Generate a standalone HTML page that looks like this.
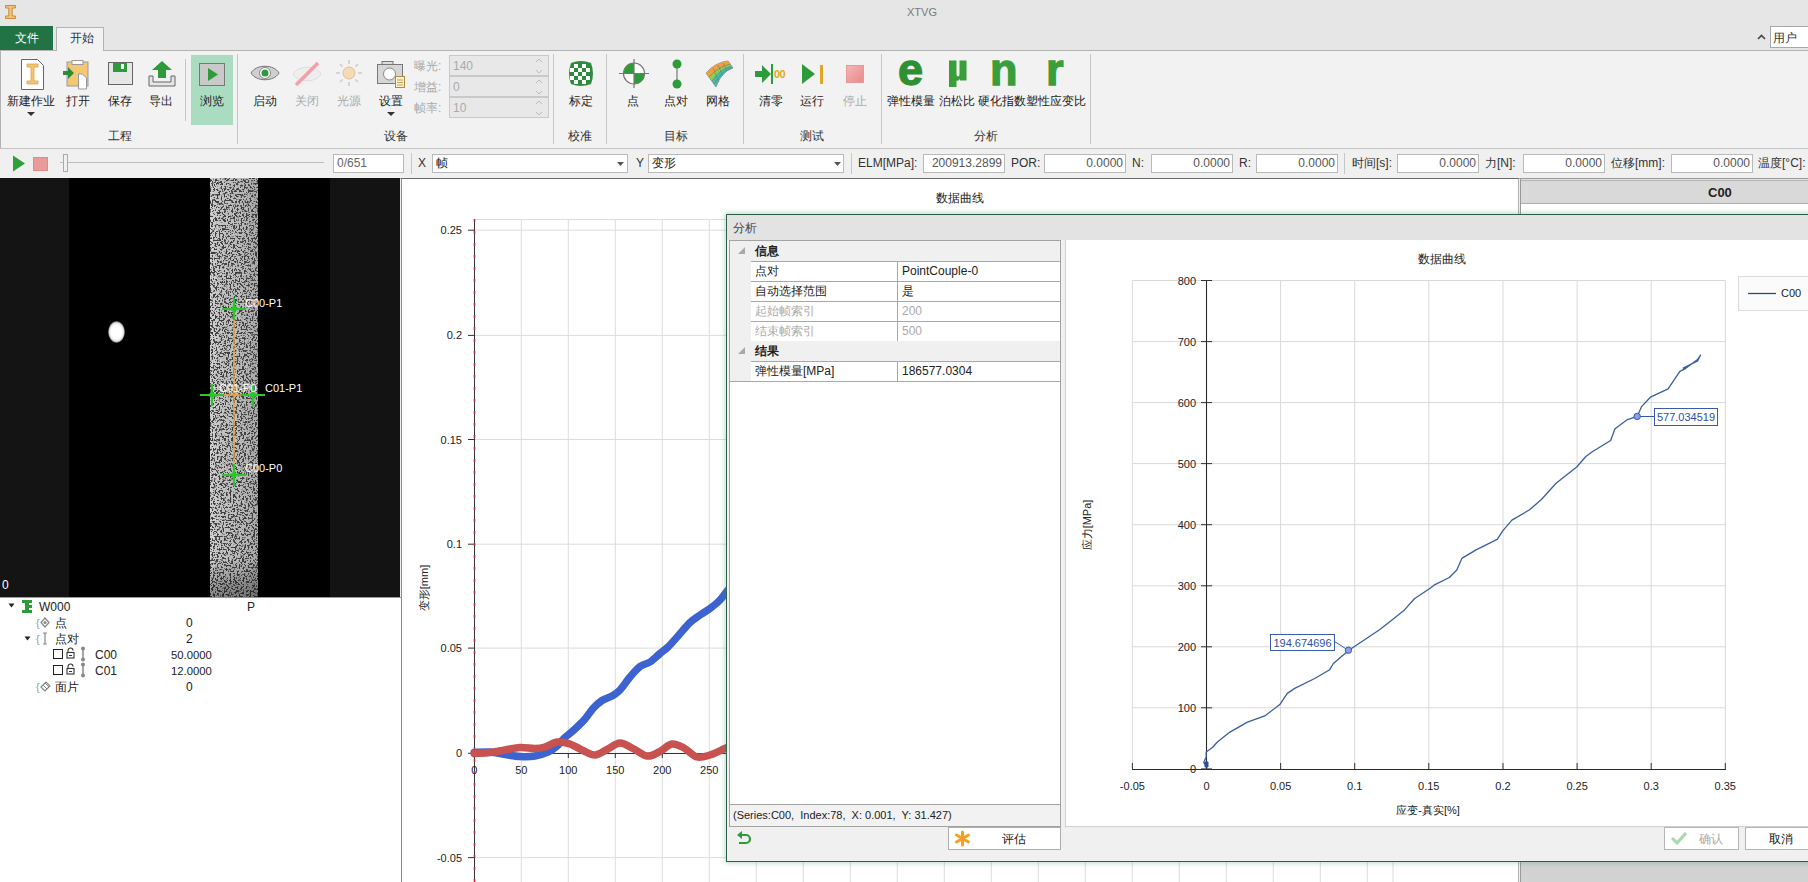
<!DOCTYPE html>
<html><head><meta charset="utf-8">
<style>
*{box-sizing:border-box;margin:0;padding:0}
html,body{width:1808px;height:882px;overflow:hidden;background:#f0f0f0;font-family:"Liberation Sans",sans-serif;font-size:12px;color:#222}
.a{position:absolute}
.t{position:absolute;white-space:nowrap;line-height:14px;height:14px}
.c{position:absolute;white-space:nowrap;line-height:14px;height:14px;width:120px;margin-left:-60px;text-align:center}
.lb{top:94px;color:#222}
.gl{top:129px;color:#333}
.dis{color:#aaa}
.sep{position:absolute;width:1px;background:#c6c6c6}
.box{position:absolute;background:#fff;border:1px solid #b9b9b9;height:19px;top:154px;text-align:right;padding-right:2px;line-height:17px;color:#555;font-size:12px}
.tbl{position:absolute;top:156px;line-height:14px;color:#333;white-space:nowrap}
</style></head><body>
<!-- ===== title bar ===== -->
<div class="a" style="left:0;top:0;width:1808px;height:51px;background:#e6e6e6"></div>
<svg class="a" style="left:4px;top:4px" width="13" height="16" viewBox="0 0 13 16">
 <path d="M1.5 1.5h10v2.5h-3.3v8h3.3v2.5h-10v-2.5h3.3v-8H1.5z" fill="#f3c477" stroke="#c98a3a" stroke-width="1"/>
</svg>
<div class="t" style="left:907px;top:5px;font-size:11px;color:#7a7a7a">XTVG</div>
<div class="a" style="left:0;top:26px;width:53px;height:24px;background:#217346"></div>
<div class="t" style="left:15px;top:31px;color:#fff">文件</div>
<div class="a" style="left:56px;top:27px;width:48px;height:24px;background:#f2f2f2;border:1px solid #b3b3b3;border-bottom:none;z-index:2"></div>
<div class="t" style="left:70px;top:31px;color:#333;z-index:3">开始</div>
<svg class="a" style="left:1757px;top:34px" width="9" height="6"><path d="M1 5L4.5 1.5 8 5" fill="none" stroke="#444" stroke-width="1.6"/></svg>
<div class="a" style="left:1770px;top:26px;width:40px;height:22px;background:#fff;border:1px solid #a8a8a8"></div>
<div class="t" style="left:1773px;top:31px;color:#333">用户</div>

<!-- ===== ribbon ===== -->
<div class="a" style="left:0;top:50px;width:1808px;height:99px;background:#f2f2f2;border-top:1px solid #b3b3b3;border-bottom:1px solid #c5c5c5;border-left:1px solid #b3b3b3"></div>
<!-- 工程 -->
<svg class="a" style="left:20px;top:58px" width="26" height="33" viewBox="0 0 26 33">
 <path d="M1.5 1.5h16l6 6v24h-22z" fill="#fff" stroke="#666" stroke-width="1"/>
 <path d="M7 6h11v3h-4v14h4v3H7v-3h4V9H7z" fill="#f2c572" stroke="#d9a545" stroke-width=".8"/>
</svg>
<div class="c lb" style="left:31px">新建作业</div>
<svg class="a" style="left:27px;top:112px" width="8" height="5"><path d="M0 0h8L4 4z" fill="#333"/></svg>
<svg class="a" style="left:63px;top:60px" width="30" height="30" viewBox="0 0 30 30">
 <rect x="4" y="2" width="21" height="24" fill="#f4c774" stroke="#999" stroke-width="1"/>
 <rect x="9" y="0.5" width="11" height="4" fill="#fff" stroke="#999"/>
 <path d="M15.5 14h4l4 4v11h-8z" fill="#fff" stroke="#999"/>
 <path d="M0 11h5V7l6 6-6 6v-4H0z" fill="#2e8b3e"/>
</svg>
<div class="c lb" style="left:78px">打开</div>
<svg class="a" style="left:108px;top:62px" width="25" height="23" viewBox="0 0 25 23">
 <rect x="0.5" y="0.5" width="24" height="22" fill="#e6e6e6" stroke="#666"/>
 <rect x="5" y="1" width="14" height="9" fill="#2e9a3a"/>
 <rect x="13" y="2" width="3" height="5" fill="#fff"/>
</svg>
<div class="c lb" style="left:120px">保存</div>
<svg class="a" style="left:148px;top:60px" width="28" height="28" viewBox="0 0 28 28">
 <path d="M1 16v10h26V16h-4v6H5v-6z" fill="#e6e6e6" stroke="#666"/>
 <path d="M14 1l10 9h-6v8h-8v-8H4z" fill="#2e9a3a"/>
</svg>
<div class="c lb" style="left:161px">导出</div>
<div class="sep" style="left:185px;top:59px;height:62px"></div>
<div class="a" style="left:191px;top:55px;width:42px;height:70px;background:#a9dcc1"></div>
<svg class="a" style="left:199px;top:63px" width="26" height="23" viewBox="0 0 26 23">
 <rect x="0.5" y="0.5" width="25" height="22" fill="#c9c9c9" stroke="#777"/>
 <path d="M9 5l10 6.5L9 18z" fill="#2e9a3a"/>
</svg>
<div class="c lb" style="left:212px">浏览</div>
<div class="c gl" style="left:120px">工程</div>
<div class="sep" style="left:237px;top:54px;height:90px"></div>
<!-- 设备 -->
<svg class="a" style="left:250px;top:61px" width="30" height="24" viewBox="0 0 30 24">
 <path d="M1 12C6 3 24 3 29 12C24 21 6 21 1 12z" fill="#cfcfcf" stroke="#777"/>
 <circle cx="15" cy="12" r="5.5" fill="#fff" stroke="#888"/>
 <circle cx="15" cy="12" r="3.5" fill="#2e9a3a"/>
</svg>
<div class="c lb" style="left:265px">启动</div>
<svg class="a" style="left:292px;top:60px" width="30" height="28" viewBox="0 0 30 28">
 <path d="M1 14C6 5 24 5 29 14C24 23 6 23 1 14z" fill="#eee" stroke="#ddd"/>
 <path d="M4 25L26 3" stroke="#f0a0a8" stroke-width="3.5"/>
</svg>
<div class="c lb dis" style="left:307px">关闭</div>
<svg class="a" style="left:335px;top:59px" width="28" height="28" viewBox="0 0 28 28">
 <circle cx="14" cy="14" r="6" fill="#f3dcb5" stroke="#e0c090"/>
 <g stroke="#ccc" stroke-width="1.6"><path d="M14 1v4M14 23v4M1 14h4M23 14h4M5 5l2.5 2.5M20.5 20.5L23 23M5 23l2.5-2.5M20.5 7.5L23 5"/></g>
</svg>
<div class="c dis lb" style="left:349px">光源</div>
<svg class="a" style="left:377px;top:61px" width="30" height="28" viewBox="0 0 30 28">
 <rect x="0.5" y="3.5" width="25" height="19" fill="#d6d6d6" stroke="#777"/>
 <rect x="5" y="0.5" width="11" height="3" fill="#ddd" stroke="#777"/>
 <circle cx="12.5" cy="13" r="6" fill="#fff" stroke="#888"/>
 <rect x="18.5" y="15.5" width="9" height="11" fill="#fff3d0" stroke="#b08a40"/>
 <path d="M20 19h6M20 21.5h6M20 24h6" stroke="#b08a40" stroke-width=".8"/>
</svg>
<div class="c lb" style="left:391px">设置</div>
<svg class="a" style="left:387px;top:112px" width="8" height="5"><path d="M0 0h8L4 4z" fill="#333"/></svg>
<div class="t dis" style="left:414px;top:59px">曝光:</div>
<div class="t dis" style="left:414px;top:80px">增益:</div>
<div class="t dis" style="left:414px;top:101px">帧率:</div>
<div class="a" style="left:449px;top:55px;width:100px;height:21px;background:#e8e8e8;border:1px solid #c9c9c9"></div>
<div class="a" style="left:449px;top:76px;width:100px;height:21px;background:#e8e8e8;border:1px solid #c9c9c9"></div>
<div class="a" style="left:449px;top:97px;width:100px;height:21px;background:#e8e8e8;border:1px solid #c9c9c9"></div>
<div class="t dis" style="left:453px;top:59px">140</div>
<div class="t dis" style="left:453px;top:80px">0</div>
<div class="t dis" style="left:453px;top:101px">10</div>
<svg class="a" style="left:535px;top:58px" width="8" height="58" viewBox="0 0 8 58">
 <g fill="none" stroke="#bbb" stroke-width="1"><path d="M1 4l3-3 3 3M1 12l3 3 3-3M1 25l3-3 3 3M1 33l3 3 3-3M1 46l3-3 3 3M1 54l3 3 3-3"/></g>
</svg>
<div class="c gl" style="left:396px">设备</div>
<div class="sep" style="left:553px;top:54px;height:90px"></div>
<!-- 校准 -->
<svg class="a" style="left:568px;top:60px" width="26" height="27" viewBox="0 0 26 27">
 <path d="M3 3Q13 -1 23 3Q27 13.5 23 24Q13 28 3 24Q-1 13.5 3 3z" fill="#2e8b3e"/>
 <g fill="#fff">
  <rect x="6" y="4" width="4" height="4"/><rect x="14" y="4" width="4" height="4"/>
  <rect x="2" y="8" width="4" height="4"/><rect x="10" y="8" width="4" height="4"/><rect x="18" y="8" width="4" height="4"/>
  <rect x="6" y="12" width="4" height="4"/><rect x="14" y="12" width="4" height="4"/>
  <rect x="2" y="16" width="4" height="4"/><rect x="10" y="16" width="4" height="4"/><rect x="18" y="16" width="4" height="4"/>
  <rect x="6" y="20" width="4" height="4"/><rect x="14" y="20" width="4" height="4"/>
 </g>
</svg>
<div class="c lb" style="left:581px">标定</div>
<div class="c gl" style="left:580px">校准</div>
<div class="sep" style="left:606px;top:54px;height:90px"></div>
<!-- 目标 -->
<svg class="a" style="left:619px;top:59px" width="30" height="29" viewBox="0 0 30 29">
 <circle cx="15" cy="14.5" r="10.5" fill="#fff" stroke="#777" stroke-width="1.2"/>
 <path d="M15 14.5V4A10.5 10.5 0 0 0 4.5 14.5z" fill="#2e9a3a"/>
 <path d="M15 14.5V25A10.5 10.5 0 0 0 25.5 14.5z" fill="#2e9a3a"/>
 <path d="M15 0v29M0 14.5h30" stroke="#777" stroke-width="1.2"/>
</svg>
<div class="c lb" style="left:633px">点</div>
<svg class="a" style="left:670px;top:58px" width="14" height="32" viewBox="0 0 14 32">
 <path d="M7 6v20" stroke="#777" stroke-width="1.2"/>
 <circle cx="7" cy="6" r="4.5" fill="#2e9a3a"/><circle cx="7" cy="26" r="4.5" fill="#2e9a3a"/>
</svg>
<div class="c lb" style="left:676px">点对</div>
<svg class="a" style="left:704px;top:60px" width="30" height="28" viewBox="0 0 30 28">
 <path d="M2 13Q12 2 24 1L29 8Q17 12 12 27z" fill="#3cc0b0" stroke="#888" stroke-width=".8"/>
 <path d="M2 13Q12 2 24 1L26 4Q14 7 5 17z" fill="#f0a040"/>
 <path d="M5 17Q14 7 26 4L27 6Q16 9 8 21z" fill="#8ccf50"/>
 <g stroke="#777" stroke-width=".6" fill="none"><path d="M5 17Q14 7 26 4M8 21Q16 9 27 6M10 24Q18 11 28 7M9 8L15 22M14 5L19 16M19 3L23 11"/></g>
</svg>
<div class="c lb" style="left:718px">网格</div>
<div class="c gl" style="left:676px">目标</div>
<div class="sep" style="left:743px;top:54px;height:90px"></div>
<!-- 测试 -->
<svg class="a" style="left:755px;top:63px" width="34" height="22" viewBox="0 0 34 22">
 <path d="M0 8h7V2l9 9-9 9v-6H0z" fill="#2e9a3a"/>
 <rect x="16" y="1" width="2" height="20" fill="#2e9a3a"/>
</svg>
<div class="t" style="left:774px;top:67px;font-size:11px;font-weight:bold;color:#e0a820;letter-spacing:-0.5px">00</div>
<div class="c lb" style="left:771px">清零</div>
<svg class="a" style="left:801px;top:63px" width="24" height="23" viewBox="0 0 24 23">
 <path d="M1 1l13 10L1 21z" fill="#2e9a3a"/>
 <rect x="19" y="2" width="3" height="19" fill="#e0a820"/>
</svg>
<div class="c lb" style="left:812px">运行</div>
<div class="a" style="left:846px;top:65px;width:18px;height:18px;background:linear-gradient(135deg,#f5b5b5,#e88a8a);border:1px solid #e59a9a"></div>
<div class="c lb dis" style="left:855px">停止</div>
<div class="c gl" style="left:812px">测试</div>
<div class="sep" style="left:881px;top:54px;height:90px"></div>
<!-- 分析 -->
<div class="t" style="left:898px;top:50px;height:40px;line-height:40px;font-size:45px;font-weight:bold;color:#2e8f33;-webkit-text-stroke:1.3px #2e8f33">e</div>
<div class="c lb" style="left:911px">弹性模量</div>
<svg class="a" style="left:948px;top:60px" width="20" height="28" viewBox="0 0 20 28"><path d="M1 0.5H8.5V14Q8.5 16.5 10 16.5Q11.5 16.5 11.5 14V0.5H18.5V20.5H12V18.8Q11 20.8 9.5 20.8Q9 20.8 8.5 20.5V27H1Z" fill="#3a9e3a"/></svg>
<div class="c lb" style="left:957px">泊松比</div>
<div class="t" style="left:990px;top:50px;height:40px;line-height:40px;font-size:45px;font-weight:bold;color:#3a9e3a;-webkit-text-stroke:1.3px #3a9e3a">n</div>
<div class="c lb" style="left:1002px">硬化指数</div>
<div class="t" style="left:1046px;top:50px;height:40px;line-height:40px;font-size:45px;font-weight:bold;color:#3a9e3a;-webkit-text-stroke:1.3px #3a9e3a">r</div>
<div class="c lb" style="left:1056px">塑性应变比</div>
<div class="c gl" style="left:986px">分析</div>
<div class="sep" style="left:1090px;top:54px;height:90px"></div>

<!-- ===== toolbar ===== -->
<div class="a" style="left:0;top:149px;width:1808px;height:30px;background:#f0f0f0;border-bottom:1px solid #a8a8a8"></div>

<svg class="a" style="left:12px;top:155px" width="14" height="17" viewBox="0 0 14 17"><path d="M1 0.5l12 8-12 8z" fill="#2ea03a"/></svg>
<div class="a" style="left:33px;top:157px;width:15px;height:14px;background:#eb9a9a;border:1px solid #e08a8a"></div>
<div class="a" style="left:60px;top:162px;width:264px;height:1px;background:#bdbdbd"></div>
<div class="a" style="left:63px;top:154px;width:5px;height:18px;background:#f0f0f0;border:1px solid #aaa"></div>
<div class="box" style="left:333px;width:71px;text-align:left;padding-left:3px;color:#666">0/651</div>
<div class="sep" style="left:411px;top:153px;height:21px"></div>
<div class="tbl" style="left:418px">X</div>
<div class="box" style="left:432px;width:196px;text-align:left;padding-left:3px;color:#222">帧</div>
<svg class="a" style="left:617px;top:162px" width="8" height="5"><path d="M0 0h7L3.5 4z" fill="#555"/></svg>
<div class="tbl" style="left:636px">Y</div>
<div class="box" style="left:648px;width:196px;text-align:left;padding-left:3px;color:#222">变形</div>
<svg class="a" style="left:834px;top:162px" width="8" height="5"><path d="M0 0h7L3.5 4z" fill="#555"/></svg>
<div class="sep" style="left:851px;top:153px;height:21px"></div>
<div class="tbl" style="left:858px">ELM[MPa]:</div>
<div class="box" style="left:923px;width:82px">200913.2899</div>
<div class="tbl" style="left:1011px">POR:</div>
<div class="box" style="left:1044px;width:82px">0.0000</div>
<div class="tbl" style="left:1132px">N:</div>
<div class="box" style="left:1151px;width:82px">0.0000</div>
<div class="tbl" style="left:1239px">R:</div>
<div class="box" style="left:1256px;width:82px">0.0000</div>
<div class="sep" style="left:1344px;top:153px;height:21px"></div>
<div class="tbl" style="left:1352px">时间[s]:</div>
<div class="box" style="left:1397px;width:82px">0.0000</div>
<div class="tbl" style="left:1485px">力[N]:</div>
<div class="box" style="left:1523px;width:82px">0.0000</div>
<div class="tbl" style="left:1611px">位移[mm]:</div>
<div class="box" style="left:1671px;width:82px">0.0000</div>
<div class="tbl" style="left:1758px">温度[°C]:</div>

<!-- ===== left image ===== -->
<div class="a" style="left:0;top:178px;width:400px;height:419px;background:#000;overflow:hidden">
 <div class="a" style="left:0;top:0;width:69px;height:419px;background:#141414"></div>
 <div class="a" style="left:330px;top:0;width:70px;height:419px;background:#131313"></div>
 <div class="a" style="left:210px;top:0;width:48px;height:419px;background:linear-gradient(90deg,#d4d4d4 0,#c4c4c4 20%,#b8b8b8 70%,#a8a8a8 100%)"></div>
 <svg class="a" style="left:210px;top:0" width="48" height="419">
  <filter id="nz" x="0" y="0" width="100%" height="100%"><feTurbulence type="fractalNoise" baseFrequency="0.55" numOctaves="2" seed="3"/><feColorMatrix values="0 0 0 0 0.05  0 0 0 0 0.05  0 0 0 0 0.05  10 0 0 0 -5.0"/></filter>
  <rect width="48" height="419" filter="url(#nz)"/>
  <rect y="380" width="48" height="39" fill="url(#bg1)"/>
  <linearGradient id="bg1" x1="0" y1="0" x2="0" y2="1"><stop offset="0" stop-color="#000" stop-opacity="0"/><stop offset="1" stop-color="#000" stop-opacity="0.35"/></linearGradient>
 </svg>
 <div class="a" style="left:108px;top:143px;width:17px;height:22px;border-radius:50%;background:radial-gradient(#fff 45%,#ddd 60%,rgba(80,80,80,0) 75%)"></div>
 <div class="t" style="left:2px;top:400px;color:#fff;font-size:12px">0</div>
</div>
<svg class="a" style="left:0;top:178px" width="400" height="419" viewBox="0 178 400 419">
 <path d="M234 309V475M212 395H253" stroke="#e8a030" stroke-width="1.3"/>
 <defs><g id="mk" fill="#28c828" stroke="#28c828"><path d="M0 -6L1.8 -1.8L6 0L1.8 1.8L0 6L-1.8 1.8L-6 0L-1.8 -1.8z" stroke="none"/><path d="M-12 0H12M0 -11V11" stroke-width="2.2"/></g></defs>
 <use href="#mk" x="234" y="309"/><use href="#mk" x="212" y="395"/><use href="#mk" x="253" y="395"/><use href="#mk" x="234" y="475"/>
 <g fill="#fff" font-family="Liberation Sans" font-size="11">
  <text x="245" y="307">C00-P1</text>
  <text x="219" y="392">C01-P0</text><text x="265" y="392">C01-P1</text>
  <text x="245" y="472">C00-P0</text>
 </g>
</svg>

<!-- ===== tree ===== -->
<div class="a" style="left:0;top:597px;width:402px;height:285px;background:#fff;border-top:1px solid #9a9a9a;border-right:1px solid #9a9a9a"></div>


<!-- tree content -->
<svg class="a" style="left:8px;top:603px" width="8" height="6"><path d="M0.5 0.5h6L3.5 4.5z" fill="#222"/></svg>
<svg class="a" style="left:21px;top:599px" width="13" height="15" viewBox="0 0 13 15"><path d="M1 1h10v3H8v2h3v3H8v2h3v3H1v-3h3V4H1z" fill="#2e9a3a"/></svg>
<div class="t" style="left:39px;top:600px">W000</div>
<div class="t" style="left:247px;top:600px">P</div>
<div class="t" style="left:36px;top:616px;color:#999;font-size:11px">{</div>
<svg class="a" style="left:40px;top:617px" width="10" height="11" viewBox="0 0 10 11"><path d="M5 1L9 5.5 5 10 1 5.5z" fill="none" stroke="#888" stroke-width="1.3"/><circle cx="5" cy="5.5" r="1.5" fill="#888"/></svg>
<div class="t" style="left:55px;top:616px">点</div>
<div class="t" style="left:186px;top:616px">0</div>
<svg class="a" style="left:24px;top:636px" width="8" height="6"><path d="M0.5 0.5h6L3.5 4.5z" fill="#222"/></svg>
<div class="t" style="left:36px;top:632px;color:#999;font-size:11px">{</div>
<svg class="a" style="left:42px;top:632px" width="6" height="13" viewBox="0 0 6 13"><path d="M1 1h4M3 1v11M1 12h4" fill="none" stroke="#888" stroke-width="1.2"/></svg>
<div class="t" style="left:55px;top:632px">点对</div>
<div class="t" style="left:186px;top:632px">2</div>
<div class="a" style="left:53px;top:649px;width:10px;height:10px;border:1px solid #222;background:#fff"></div>
<svg class="a" style="left:66px;top:647px" width="9" height="12" viewBox="0 0 9 12"><path d="M2 5V3.5A2.5 2.5 0 0 1 7 3.5" fill="none" stroke="#333" stroke-width="1.1"/><rect x="1" y="5.5" width="7" height="5.5" fill="none" stroke="#333" stroke-width="1.1"/><path d="M3 8.5h3" stroke="#333"/></svg>
<svg class="a" style="left:80px;top:646px" width="6" height="16" viewBox="0 0 6 16"><circle cx="3" cy="2.5" r="2" fill="#888"/><path d="M3 3V13" stroke="#888" stroke-width="1.5"/><circle cx="3" cy="13.5" r="2" fill="#888"/></svg>
<div class="t" style="left:95px;top:648px">C00</div>
<div class="t" style="left:171px;top:648px;font-size:11.3px">50.0000</div>
<div class="a" style="left:53px;top:665px;width:10px;height:10px;border:1px solid #222;background:#fff"></div>
<svg class="a" style="left:66px;top:663px" width="9" height="12" viewBox="0 0 9 12"><path d="M2 5V3.5A2.5 2.5 0 0 1 7 3.5" fill="none" stroke="#333" stroke-width="1.1"/><rect x="1" y="5.5" width="7" height="5.5" fill="none" stroke="#333" stroke-width="1.1"/><path d="M3 8.5h3" stroke="#333"/></svg>
<svg class="a" style="left:80px;top:662px" width="6" height="16" viewBox="0 0 6 16"><circle cx="3" cy="2.5" r="2" fill="#888"/><path d="M3 3V13" stroke="#888" stroke-width="1.5"/><circle cx="3" cy="13.5" r="2" fill="#888"/></svg>
<div class="t" style="left:95px;top:664px">C01</div>
<div class="t" style="left:171px;top:664px;font-size:11.3px">12.0000</div>
<div class="t" style="left:36px;top:680px;color:#999;font-size:11px">{</div>
<svg class="a" style="left:40px;top:681px" width="11" height="11" viewBox="0 0 11 11"><path d="M1 6L6 1 10 5 5 10z" fill="none" stroke="#888" stroke-width="1.2"/><path d="M3 4l4 4M5 2l4 4" stroke="#888"/></svg>
<div class="t" style="left:55px;top:680px">面片</div>
<div class="t" style="left:186px;top:680px">0</div>
<!-- ===== background chart ===== -->
<div class="a" style="left:401px;top:178px;width:1118px;height:704px;background:#fff;border-left:1px solid #8a8a8a;border-top:1px solid #6a6a6a;border-right:1px solid #b0b0b0"></div>
<svg class="a" style="left:402px;top:179px" width="1116" height="703" viewBox="402 179 1116 703">
 <g stroke="#dcdcdc" stroke-width="1" fill="none"><path d="M521.3 219V882"/><path d="M568.3 219V882"/><path d="M615.3 219V882"/><path d="M662.3 219V882"/><path d="M709.3 219V882"/><path d="M756.3 219V882"/><path d="M803.3 219V882"/><path d="M850.3 219V882"/><path d="M897.3 219V882"/><path d="M944.3 219V882"/><path d="M991.3 219V882"/><path d="M1038.3 219V882"/><path d="M1085.3 219V882"/><path d="M1132.3 219V882"/><path d="M1179.3 219V882"/><path d="M1226.3 219V882"/><path d="M1273.3 219V882"/><path d="M1320.3 219V882"/><path d="M1367.3 219V882"/><path d="M1393.0 219V882"/><path d="M474 230.2H1393"/><path d="M474 335.4H1393"/><path d="M474 439.5H1393"/><path d="M474 544.2H1393"/><path d="M474 648.1H1393"/><path d="M474 753.3H1393"/><path d="M474 857.6H1393"/><path d="M474 219.5H1393"/></g>
 <path d="M474.5 219V882M474 753.5H1393" stroke="#333" stroke-width="1"/>
 <path d="M468 230.2H474M468 335.4H474M468 439.5H474M468 544.2H474M468 648.1H474M468 753.3H474M468 857.6H474M474.3 753V758M521.3 753V758M568.3 753V758M615.3 753V758M662.3 753V758M709.3 753V758M756.3 753V758M803.3 753V758M850.3 753V758M897.3 753V758M944.3 753V758M991.3 753V758M1038.3 753V758M1085.3 753V758M1132.3 753V758M1179.3 753V758M1226.3 753V758M1273.3 753V758M1320.3 753V758M1367.3 753V758" stroke="#333" stroke-width="1"/>
 <path d="M474.5 219V882" stroke="#d02040" stroke-width="1.6" stroke-dasharray="3 9"/>
 <g font-family="Liberation Sans" font-size="11" fill="#222"><text x="462" y="234.2" text-anchor="end">0.25</text><text x="462" y="339.4" text-anchor="end">0.2</text><text x="462" y="443.5" text-anchor="end">0.15</text><text x="462" y="548.2" text-anchor="end">0.1</text><text x="462" y="652.1" text-anchor="end">0.05</text><text x="462" y="757.3" text-anchor="end">0</text><text x="462" y="861.6" text-anchor="end">-0.05</text><text x="474.3" y="774" text-anchor="middle">0</text><text x="521.3" y="774" text-anchor="middle">50</text><text x="568.3" y="774" text-anchor="middle">100</text><text x="615.3" y="774" text-anchor="middle">150</text><text x="662.3" y="774" text-anchor="middle">200</text><text x="709.3" y="774" text-anchor="middle">250</text><text x="756.3" y="774" text-anchor="middle">300</text><text x="803.3" y="774" text-anchor="middle">350</text><text x="850.3" y="774" text-anchor="middle">400</text><text x="897.3" y="774" text-anchor="middle">450</text><text x="944.3" y="774" text-anchor="middle">500</text><text x="991.3" y="774" text-anchor="middle">550</text><text x="1038.3" y="774" text-anchor="middle">600</text><text x="1085.3" y="774" text-anchor="middle">650</text><text x="1132.3" y="774" text-anchor="middle">700</text><text x="1179.3" y="774" text-anchor="middle">750</text><text x="1226.3" y="774" text-anchor="middle">800</text><text x="1273.3" y="774" text-anchor="middle">850</text><text x="1320.3" y="774" text-anchor="middle">900</text><text x="1367.3" y="774" text-anchor="middle">950</text></g>
 <text x="960" y="202" text-anchor="middle" font-family="Liberation Sans" font-size="12" fill="#222">数据曲线</text>
 <text transform="translate(428 588) rotate(-90)" text-anchor="middle" font-family="Liberation Sans" font-size="11" fill="#222">变形[mm]</text>
 <path d="M474.2 752.5C476.8 752.4 484.9 751.7 490.0 752.0C495.1 752.3 500.0 753.8 505.0 754.5C510.0 755.2 515.0 756.2 520.0 756.5C525.0 756.8 530.3 756.8 535.0 756.0C539.7 755.2 544.5 753.5 548.0 752.0C551.5 750.5 553.2 749.4 556.0 747.0C558.8 744.6 561.8 740.5 565.0 737.5C568.2 734.5 571.7 732.1 575.0 729.0C578.3 725.9 582.0 722.4 585.0 719.0C588.0 715.6 590.2 711.6 593.0 708.5C595.8 705.4 598.8 702.6 602.0 700.5C605.2 698.4 609.0 697.8 612.0 696.0C615.0 694.2 617.0 693.2 620.0 690.0C623.0 686.8 626.7 680.9 630.0 677.0C633.3 673.1 636.7 669.0 640.0 666.5C643.3 664.0 646.7 664.2 650.0 662.0C653.3 659.8 657.0 656.0 660.0 653.5C663.0 651.0 665.0 649.9 668.0 647.0C671.0 644.1 674.3 640.1 678.0 636.0C681.7 631.9 686.3 626.0 690.0 622.5C693.7 619.0 696.7 617.3 700.0 615.0C703.3 612.7 706.7 611.0 710.0 608.5C713.3 606.0 717.0 603.1 720.0 600.0C723.0 596.9 725.5 592.8 728.0 590.0C730.5 587.2 733.8 584.2 735.0 583.0" fill="none" stroke="#3d63d0" stroke-width="7.5" stroke-linejoin="round" stroke-linecap="round"/>
 <path d="M474.2 753.5C476.8 753.3 484.9 753.1 490.0 752.5C495.1 751.9 500.0 750.8 505.0 750.0C510.0 749.2 515.0 747.8 520.0 747.5C525.0 747.2 530.8 748.6 535.0 748.5C539.2 748.4 541.3 748.1 545.0 747.0C548.7 745.9 552.8 742.5 557.0 742.0C561.2 741.5 565.7 742.6 570.0 744.0C574.3 745.4 578.8 748.7 583.0 750.5C587.2 752.3 591.0 755.2 595.0 755.0C599.0 754.8 602.8 751.5 607.0 749.5C611.2 747.5 615.7 743.2 620.0 743.0C624.3 742.8 628.5 746.3 633.0 748.5C637.5 750.7 642.7 755.4 647.0 756.0C651.3 756.6 654.8 754.0 659.0 752.0C663.2 750.0 667.8 744.7 672.0 744.0C676.2 743.3 679.8 745.8 684.0 748.0C688.2 750.2 692.7 755.8 697.0 757.0C701.3 758.2 705.3 756.4 710.0 755.0C714.7 753.6 720.8 750.3 725.0 748.5C729.2 746.7 733.3 744.8 735.0 744.0" fill="none" stroke="#c85250" stroke-width="7.5" stroke-linejoin="round" stroke-linecap="round"/>
</svg>
<!-- right panel -->
<div class="a" style="left:1520px;top:178px;width:288px;height:704px;background:linear-gradient(180deg,#e2e2e2,#d2d2d2);border-left:1px solid #9a9a9a;border-top:1px solid #9a9a9a"></div>
<div class="a" style="left:1521px;top:180px;width:287px;height:24px;background:#d9d9d9;border-top:1px solid #b5b5b5;border-bottom:1px solid #b0b0b0"></div>
<div class="a" style="left:1521px;top:204px;width:287px;height:10px;background:#fff"></div>
<div class="t" style="left:1708px;top:186px;font-size:13px;font-weight:bold;color:#222">C00</div>

<!-- ===== dialog ===== -->
<div class="a" style="left:726px;top:214px;width:1090px;height:648px;background:#f0f0f0;border:1px solid #2d5e47;box-shadow:0 0 5px 1px rgba(60,150,100,0.35)"></div>
<div class="a" style="left:727px;top:215px;width:1085px;height:25px;background:#e3e3e3"></div>
<div class="t" style="left:733px;top:221px;color:#444">分析</div>
<!-- property grid -->
<div class="a" style="left:729px;top:240px;width:332px;height:565px;background:#fff;border:1px solid #a3a3a3"></div>
<div class="a" style="left:730px;top:241px;width:21px;height:140px;background:#f0f0f0"></div>
<div class="a" style="left:730px;top:241px;width:330px;height:20px;background:#f0f0f0"></div>
<div class="a" style="left:730px;top:341px;width:330px;height:20px;background:#f0f0f0"></div>
<div class="a" style="left:751px;top:261px;width:309px;height:1px;background:#a8a8a8"></div>
<div class="a" style="left:751px;top:281px;width:309px;height:1px;background:#a8a8a8"></div>
<div class="a" style="left:751px;top:301px;width:309px;height:1px;background:#a8a8a8"></div>
<div class="a" style="left:751px;top:321px;width:309px;height:1px;background:#a8a8a8"></div>
<div class="a" style="left:751px;top:361px;width:309px;height:1px;background:#a8a8a8"></div>
<div class="a" style="left:730px;top:381px;width:330px;height:1px;background:#a8a8a8"></div>
<div class="a" style="left:897px;top:262px;width:1px;height:79px;background:#a8a8a8"></div>
<div class="a" style="left:897px;top:362px;width:1px;height:19px;background:#a8a8a8"></div>
<svg class="a" style="left:737px;top:246px" width="9" height="9"><path d="M8 1V8H1z" fill="#a9a9a9"/></svg>
<svg class="a" style="left:737px;top:346px" width="9" height="9"><path d="M8 1V8H1z" fill="#a9a9a9"/></svg>
<div class="t" style="left:755px;top:244px;font-weight:bold;color:#222">信息</div>
<div class="t" style="left:755px;top:344px;font-weight:bold;color:#222">结果</div>
<div class="t" style="left:755px;top:264px;color:#222">点对</div><div class="t" style="left:902px;top:264px;color:#222">PointCouple-0</div><div class="t" style="left:755px;top:284px;color:#222">自动选择范围</div><div class="t" style="left:902px;top:284px;color:#222">是</div><div class="t" style="left:755px;top:304px;color:#aaa">起始帧索引</div><div class="t" style="left:902px;top:304px;color:#aaa">200</div><div class="t" style="left:755px;top:324px;color:#aaa">结束帧索引</div><div class="t" style="left:902px;top:324px;color:#aaa">500</div><div class="t" style="left:755px;top:364px;color:#222">弹性模量[MPa]</div><div class="t" style="left:902px;top:364px;color:#222">186577.0304</div>
<!-- status -->
<div class="a" style="left:729px;top:804px;width:332px;height:23px;background:#f2f2f2;border:1px solid #a3a3a3"></div>
<div class="t" style="left:733px;top:808px;color:#222;font-size:11px">(Series:C00,&nbsp; Index:78,&nbsp; X: 0.001,&nbsp; Y: 31.427)</div>
<svg class="a" style="left:736px;top:830px" width="16" height="16" viewBox="0 0 16 16">
 <path d="M4 5H10A4 4 0 0 1 10 13H3" fill="none" stroke="#2e9a3a" stroke-width="2.2"/>
 <path d="M1 5L6 1V9z" fill="#2e9a3a"/>
</svg>
<div class="a" style="left:948px;top:827px;width:113px;height:23px;background:#fff;border:1px solid #adadad"></div>
<svg class="a" style="left:954px;top:830px" width="17" height="17" viewBox="0 0 17 17">
 <g stroke="#f5a020" stroke-width="3" stroke-linecap="round"><path d="M8.5 2V15M2.5 5L14.5 12M2.5 12L14.5 5"/></g>
</svg>
<div class="t" style="left:1002px;top:832px;color:#222">评估</div>
<!-- dialog chart -->
<div class="a" style="left:1065px;top:240px;width:750px;height:587px;background:#fff;border-left:1px solid #d0d0d0;border-bottom:1px solid #d0d0d0"></div>
<svg class="a" style="left:1066px;top:240px" width="742" height="586" viewBox="1066 240 742 586">
 <g stroke="#d9d9d9" stroke-width="1" fill="none"><path d="M1132.4 280.5V769"/><path d="M1206.5 280.5V769"/><path d="M1280.6 280.5V769"/><path d="M1354.7 280.5V769"/><path d="M1428.8 280.5V769"/><path d="M1503.0 280.5V769"/><path d="M1577.1 280.5V769"/><path d="M1651.2 280.5V769"/><path d="M1725.3 280.5V769"/><path d="M1132.4 280.5H1725.3"/><path d="M1132.4 341.6H1725.3"/><path d="M1132.4 402.6H1725.3"/><path d="M1132.4 463.6H1725.3"/><path d="M1132.4 524.7H1725.3"/><path d="M1132.4 585.8H1725.3"/><path d="M1132.4 646.8H1725.3"/><path d="M1132.4 707.8H1725.3"/></g>
 <path d="M1206.5 280.5V769M1132 769.5H1726" stroke="#2a2a2a" stroke-width="1.1"/>
 <path d="M1201 280.5H1212M1201 341.6H1212M1201 402.6H1212M1201 463.6H1212M1201 524.7H1212M1201 585.8H1212M1201 646.8H1212M1201 707.8H1212M1201 768.9H1212M1132.4 763V769M1206.5 763V769M1280.6 763V769M1354.7 763V769M1428.8 763V769M1503.0 763V769M1577.1 763V769M1651.2 763V769M1725.3 763V769" stroke="#333" stroke-width="1"/>
 <g font-family="Liberation Sans" font-size="11" fill="#222"><text x="1196" y="284.5" text-anchor="end">800</text><text x="1196" y="345.6" text-anchor="end">700</text><text x="1196" y="406.6" text-anchor="end">600</text><text x="1196" y="467.6" text-anchor="end">500</text><text x="1196" y="528.7" text-anchor="end">400</text><text x="1196" y="589.8" text-anchor="end">300</text><text x="1196" y="650.8" text-anchor="end">200</text><text x="1196" y="711.8" text-anchor="end">100</text><text x="1196" y="772.9" text-anchor="end">0</text><text x="1132.4" y="790" text-anchor="middle">-0.05</text><text x="1206.5" y="790" text-anchor="middle">0</text><text x="1280.6" y="790" text-anchor="middle">0.05</text><text x="1354.7" y="790" text-anchor="middle">0.1</text><text x="1428.8" y="790" text-anchor="middle">0.15</text><text x="1503.0" y="790" text-anchor="middle">0.2</text><text x="1577.1" y="790" text-anchor="middle">0.25</text><text x="1651.2" y="790" text-anchor="middle">0.3</text><text x="1725.3" y="790" text-anchor="middle">0.35</text></g>
 <text x="1442" y="263" text-anchor="middle" font-family="Liberation Sans" font-size="12" fill="#222">数据曲线</text>
 <text x="1428" y="814" text-anchor="middle" font-family="Liberation Sans" font-size="11" fill="#222">应变-真实[%]</text>
 <text transform="translate(1091 525) rotate(-90)" text-anchor="middle" font-family="Liberation Sans" font-size="11" fill="#222">应力[MPa]</text>
 <polyline points="1206.2,765.7 1203.7,762.5 1206.2,757.0 1206.2,752.0 1212.4,747.5 1217.4,742.0 1229.9,732.1 1247.4,722.1 1264.8,715.9 1279.8,704.6 1287.3,693.4 1294.7,688.4 1314.7,678.5 1329.7,669.7 1333.4,663.5 1342.1,656.0 1349.6,649.8 1364.6,639.8 1379.5,629.8 1392.0,619.9 1404.5,609.9 1414.4,598.7 1429.4,588.7 1434.4,584.9 1449.4,577.5 1456.8,570.0 1461.8,558.4 1476.5,549.6 1497.2,539.3 1503.1,530.4 1511.9,520.1 1529.6,509.8 1541.4,499.5 1556.1,483.3 1576.7,467.0 1585.6,456.7 1591.5,452.3 1610.6,440.5 1615.0,428.7 1626.8,419.9 1637.2,416.4 1641.6,406.6 1650.4,397.2 1668.1,388.9 1679.9,371.3 1685.8,368.3 1697.6,359.5 1700.5,355.1 1697.6,360.9 1682.8,368.3" fill="none" stroke="#3a5f9e" stroke-width="1.3" stroke-linejoin="round"/>
 <path d="M1205 762h3v5h-3z" fill="#2c4f9a" stroke="#2c4f9a"/>
 <path d="M1334.6 641.5L1348.4 650.4M1654.2 416.5H1637.2" stroke="#3a5ab0" stroke-width="1"/>
 <circle cx="1348.4" cy="650.2" r="3.2" fill="#8aa0e8" stroke="#3a5ab0"/>
 <circle cx="1637.2" cy="416.4" r="3.2" fill="#8aa0e8" stroke="#3a5ab0"/>
 <rect x="1270.5" y="634.5" width="64" height="16" fill="#fff" stroke="#3a5ab0"/>
 <rect x="1654.5" y="408.5" width="63" height="17" fill="#fff" stroke="#3a5ab0"/>
 <g font-family="Liberation Sans" font-size="11" fill="#2d4fa8"><text x="1302.5" y="646.5" text-anchor="middle">194.674696</text><text x="1686" y="421" text-anchor="middle">577.034519</text></g>
 <rect x="1738.5" y="276.5" width="80" height="34" fill="#fbfbfb" stroke="#dcdcdc"/>
 <path d="M1748 293.5H1776" stroke="#2c4a7a" stroke-width="1.3"/>
 <text x="1781" y="297" font-family="Liberation Sans" font-size="11" fill="#222">C00</text>
</svg>
<div class="a" style="left:1664px;top:827px;width:75px;height:23px;background:#fff;border:1px solid #b5b5b5"></div>
<svg class="a" style="left:1671px;top:831px" width="16" height="14" viewBox="0 0 16 14"><path d="M1 7l5 5L15 2" fill="none" stroke="#a8d8a8" stroke-width="3"/></svg>
<div class="t" style="left:1699px;top:832px;color:#aaa">确认</div>
<div class="a" style="left:1745px;top:827px;width:70px;height:23px;background:#fff;border:1px solid #b5b5b5"></div>
<div class="t" style="left:1769px;top:832px;color:#111">取消</div>
</body></html>
